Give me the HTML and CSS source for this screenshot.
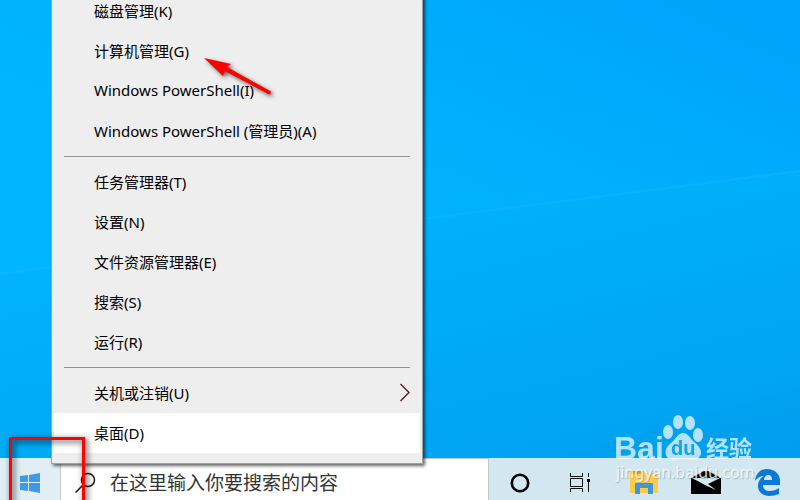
FILE: index.html
```html
<!DOCTYPE html>
<html lang="zh-CN">
<head>
  <meta charset="UTF-8">
  <meta name="viewport" content="width=device-width, initial-scale=1.0">
  <title>桌面</title>
  <link rel="stylesheet" href="styles.css">
</head>
<body>

  <!-- 桌面背景 -->
  <main class="desktop">
    <svg class="wallpaper" viewBox="0 0 800 458" preserveAspectRatio="none" aria-hidden="true">
      <defs>
        <linearGradient id="sky" x1="0.5" y1="0.6" x2="1" y2="0">
          <stop offset="0" stop-color="#00b6ff"/>
          <stop offset="1" stop-color="#00a3fa"/>
        </linearGradient>
        <linearGradient id="ground" x1="0.3" y1="0" x2="1" y2="1">
          <stop offset="0" stop-color="#00b5ff"/>
          <stop offset="1" stop-color="#00a0ef"/>
        </linearGradient>
        <linearGradient id="beam" x1="0" y1="0" x2="1" y2="0">
          <stop offset="0" stop-color="#08b8ff"/>
          <stop offset="1" stop-color="#0cb0fd"/>
        </linearGradient>
      </defs>
      <rect width="800" height="458" fill="url(#sky)"/>
      <path d="M0 274L423 219L800 171V458H0Z" fill="url(#ground)"/>
      <path d="M0 273L423 218L800 170V172L423 220L0 275Z" fill="url(#beam)"/>
      <path d="M560 458L800 387V458Z" fill="#009cec" fill-opacity="0.25"/>
    </svg>
  </main>

  <!-- 任务栏 -->
  <footer class="taskbar">
    <button class="start" aria-label="开始">
      <svg width="20" height="20" viewBox="0 0 20 20" fill="#3f9ae5">
        <path d="M0 3L8 2V9H0ZM9 2L20 0V9H9ZM0 10H8V18L0 17ZM9 10H20V20L9 18Z"/>
      </svg>
    </button>
    <label class="search">
      <svg width="22" height="22" viewBox="0 0 22 22" fill="none" stroke="#1a1a1a" stroke-width="1.5">
        <circle cx="14" cy="9" r="6.5"/>
        <path d="M9.5 13.5L1.5 21.5"/>
      </svg>
      <input type="text" placeholder="在这里输入你要搜索的内容" aria-label="搜索">
    </label>
    <button class="task" aria-label="Cortana">
      <svg width="20" height="20" viewBox="0 0 20 20" fill="none" stroke="#000" stroke-width="2.6">
        <circle cx="10" cy="10" r="8.2"/>
      </svg>
    </button>
    <button class="task" aria-label="任务视图">
      <svg width="24" height="20" viewBox="0 0 24 20" fill="none" stroke="#111" stroke-width="1">
        <path d="M.5 0V3.500H12.500V0M.5 19V15.500H12.500V19M.5 5.500H12.500V13.500H.5ZM18.500 0V4M18.500 9V19"/>
        <path d="M17 6H20V9H17Z" fill="#000" stroke="none"/>
      </svg>
    </button>
    <button class="task" aria-label="文件资源管理器">
      <svg width="28" height="24" viewBox="0 0 28 24">
        <path d="M1 0H13L15 2H27Q28 2 28 3V22H1Q0 22 0 21V1Q0 0 1 0Z" fill="#ffcb4d"/>
        <path d="M1 0H12V3H1Z" fill="#dc9f15"/>
        <path d="M5 23V13Q5 12 6 12H22Q23 12 23 13V23H18V17H10V23Z" fill="#3f98d9"/>
      </svg>
    </button>
    <button class="task" aria-label="邮件">
      <svg width="30" height="24" viewBox="0 0 30 24">
        <path d="M0 7L13 0Q15 -1 17 0L30 7V23H0Z" fill="#000"/>
        <path d="M1 7H29L17 13L25 19L14 14Z" fill="#d5e9f1"/>
      </svg>
    </button>
    <button class="task" aria-label="Microsoft Edge">
      <svg width="26" height="28" viewBox="0 0 26 28">
        <path d="M0 12C1 4 6 0 12 0C20 0 25 5 25 12V16H8C8 20 11 22 15 22C18 22 21 21 24 19V25C21 26 18 27 14 27C7 27 3 22 3 17C3 13 5 9 9 7C5 7 2 9 0 12ZM9 11H17C17 8 16 6 13 6C11 6 9 8 9 11Z" fill="#0a78d7" fill-rule="evenodd"/>
      </svg>
    </button>
  </footer>

  <!-- 右键菜单 -->
  <nav class="menu">
    <button class="item">磁盘管理(K)</button>
    <button class="item">计算机管理(G)</button>
    <button class="item">Windows PowerShell(I)</button>
    <button class="item">Windows PowerShell (管理员)(A)</button>
    <hr>
    <button class="item">任务管理器(T)</button>
    <button class="item">设置(N)</button>
    <button class="item">文件资源管理器(E)</button>
    <button class="item">搜索(S)</button>
    <button class="item">运行(R)</button>
    <hr>
    <button class="item">关机或注销(U)
      <svg width="10" height="18" viewBox="0 0 10 18" fill="none" stroke="#5c1010" stroke-width="1.3">
        <path d="M.5 1L9 9.500L.5 18"/>
      </svg>
    </button>
    <button class="item active">桌面(D)</button>
  </nav>

  <!-- 标注 -->
  <svg class="arrow" width="80" height="50" viewBox="0 0 80 50" aria-hidden="true">
    <path d="M4 8L31 14L27 17L71 41.500Q71 44 69 44.500L25 21L23 26Z" fill="#f00"/>
  </svg>
  <div class="frame"></div>

  <!-- 水印 -->
  <svg class="watermark" width="150" height="76" viewBox="0 0 150 76" role="img" aria-label="Baidu 经验">
    <g class="brand">
      <text x="1" y="47" font-size="32">Bai</text>
      <ellipse cx="55" cy="20" rx="5" ry="7"/>
      <ellipse cx="65" cy="10" rx="5" ry="7"/>
      <ellipse cx="77" cy="11" rx="5" ry="7"/>
      <ellipse cx="85" cy="23" rx="5" ry="7"/>
      <path d="M70 21C75 21 77 26 81 30C87 35 90 40 87 44C84 50 77 47 70 47C63 47 58 49 54 45C51 40 53 35 58 31C63 27 65 21 70 21Z"/>
      <text class="du" x="58" y="43" font-size="20">du</text>
      <text class="jing" x="93" y="45" font-size="23">经验</text>
    </g>
    <text class="url" x="3" y="66" font-size="16">jingyan.baidu.com</text>
  </svg>

</body>
</html>
```

FILE: styles.css
```css
* {
  box-sizing: border-box;
}

body {
  font-family: "Noto Sans", "Noto Sans CJK SC", sans-serif;
  display: flex;
  flex-direction: column;
  height: 100vh;
  margin: 0;
  position: relative;
  overflow: hidden;
}

button {
  font: inherit;
  color: inherit;
  border: none;
  background: none;
  padding: 0;
}

/* 桌面 */
.desktop {
  flex: 1;
  min-height: 0;
  background-color: #00b2fc;
}

.wallpaper {
  display: block;
  width: 100%;
  height: 100%;
}

/* 任务栏 */
.taskbar {
  display: flex;
  height: 42px;
  padding-right: 1px;
  background-color: #d2e7ef;
}

.start {
  width: 60px;
  padding-top: 8px;
  background-color: #e1eff5;
}

.start svg,
.task svg {
  display: block;
  margin: 0 auto;
}

.search {
  flex: 1;
  display: flex;
  align-items: center;
  gap: 14px;
  padding: 4px 12px 0 13px;
  background-color: #fff;
  border: 1px solid #c3c8cb;
  border-bottom: none;
}

.search input {
  flex: 1;
  min-width: 0;
  padding: 0;
  border: none;
  outline: none;
  background: none;
  font-family: "Noto Sans CJK SC", sans-serif;
  font-size: 19px;
}

.search input::placeholder {
  color: #333;
}

.task {
  width: 62px;
  padding-top: 8px;
}

/* 右键菜单，贴着任务栏向上展开 */
.menu {
  position: absolute;
  left: 51px;
  bottom: 36px;
  width: 372px;
  padding: 2px 2px 10px 2px;
  background-color: #eee;
  border: 1px solid #a0a0a0;
  box-shadow: 2px 2px 3px rgba(0, 0, 0, 0.6);
}

.menu hr {
  margin: 5px 10px;
  border: none;
  border-top: 1px solid #919191;
}

.item {
  display: flex;
  align-items: center;
  justify-content: space-between;
  width: 100%;
  height: 40px;
  padding: 0 10px 2px 40px;
  font-size: 15px;
  color: #000;
  text-align: left;
}

.item svg {
  overflow: visible;
}

.item:hover,
.item.active {
  background-color: #fff;
}

/* 标注 */
.arrow {
  position: absolute;
  left: 200px;
  top: 50px;
  filter: drop-shadow(2px 2px 2px rgba(0, 0, 0, 0.6));
}

.frame {
  position: absolute;
  left: 9px;
  bottom: -12px;
  width: 76px;
  height: 75px;
  border: 3px solid #f00;
  filter: drop-shadow(2px 2px 3px rgba(0, 0, 0, 0.8));
}

/* 水印 */
.watermark {
  position: absolute;
  right: 37px;
  bottom: 12px;
  pointer-events: none;
}

.brand {
  fill: #fff;
  opacity: 0.7;
  font-family: "Liberation Sans", sans-serif;
  font-weight: bold;
}

.brand .du {
  fill: #1aa4e4;
}

.brand .jing {
  font-family: "Noto Sans CJK SC", sans-serif;
}

.url {
  fill: rgba(255, 255, 255, 0.8);
  text-shadow: 1px 1px 1px rgba(90, 120, 130, 0.5);
}
```
